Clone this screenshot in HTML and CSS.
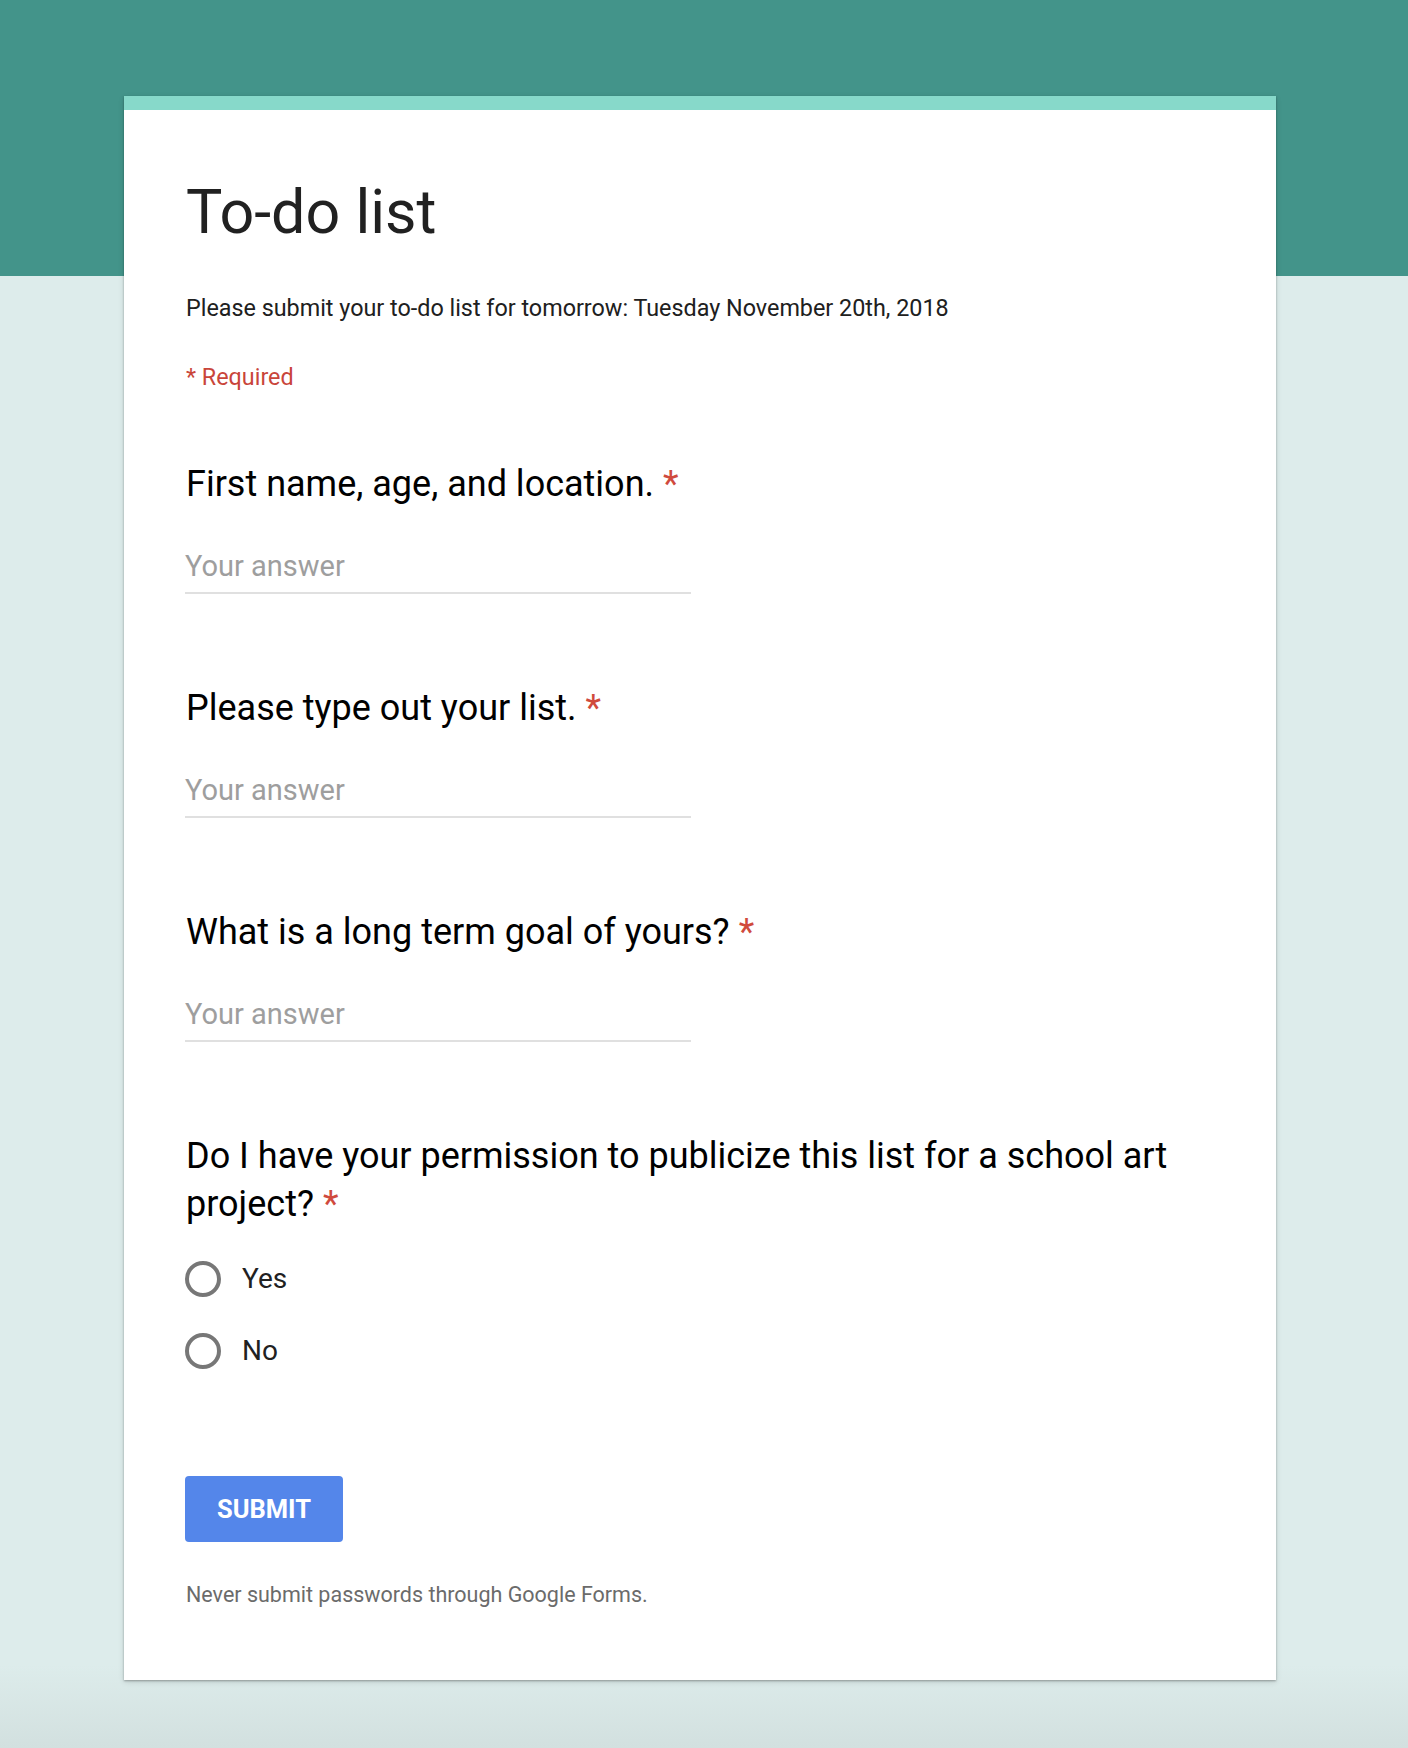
FILE: index.html
```html
<!DOCTYPE html>
<html lang="en">
<head>
<meta charset="utf-8">
<title>To-do list</title>
<link rel="stylesheet" href="styles.css">
</head>
<body>
<main class="card">
  <h1 class="title">To-do list</h1>
  <p class="desc">Please submit your to-do list for tomorrow: Tuesday November 20th, 2018</p>
  <p class="required">* Required</p>

  <div class="item">
    <div class="q">First name, age, and location.<span class="star">*</span></div>
    <div class="answer">Your answer</div>
  </div>

  <div class="item">
    <div class="q">Please type out your list.<span class="star">*</span></div>
    <div class="answer">Your answer</div>
  </div>

  <div class="item">
    <div class="q">What is a long term goal of yours?<span class="star">*</span></div>
    <div class="answer">Your answer</div>
  </div>

  <div class="item item-radio">
    <div class="q">Do I have your permission to publicize this list for a school art <span class="last-word">project?<span class="star">*</span></span></div>
    <div class="options">
      <div class="option"><span class="radio"></span><span class="opt-label">Yes</span></div>
      <div class="option"><span class="radio"></span><span class="opt-label">No</span></div>
    </div>
  </div>

  <button class="submit" type="button">SUBMIT</button>
  <p class="footer">Never submit passwords through Google Forms.</p>
</main>
</body>
</html>
```
FILE: styles.css
```css
html, body {
  margin: 0;
  padding: 0;
}

body {
  min-height: 1748px;
  font-family: Roboto, "Liberation Sans", Arial, sans-serif;
  background: linear-gradient(to bottom,
    #43948a 0px, #43948a 276px,
    #ddeceb 276px, #ddeceb 1665px,
    #d2e0df 1748px);
  overflow: hidden;
}

.card {
  box-sizing: border-box;
  width: 1152px;
  margin: 96px 0 68px 124px;
  background: #ffffff;
  border-top: 14px solid #87d9ca;
  padding: 64px 60px 70px 62px;
  box-shadow: 0 1px 2px rgba(0, 0, 0, 0.3), 0 2px 6px rgba(0, 0, 0, 0.12);
  display: flex;
  flex-direction: column;
  align-items: flex-start;
}

.title {
  margin: 0;
  font-size: 61px;
  line-height: 76px;
  font-weight: 400;
  color: #212121;
}

.desc {
  margin: 42px 0 0;
  font-size: 23.35px;
  line-height: 32px;
  color: #202020;
}

.required {
  margin: 37px 0 0;
  font-size: 23.35px;
  line-height: 32px;
  color: #c9453a;
}

.item {
  display: flex;
  flex-direction: column;
  align-self: stretch;
  margin-top: 89.6px;
}

.required + .item {
  margin-top: 67px;
}

.q {
  font-size: 36px;
  line-height: 48px;
  color: #000000;
}

.last-word {
  white-space: nowrap;
}

.star {
  margin-left: 9px;
  color: #d04a3d;
}

.answer {
  box-sizing: border-box;
  width: 506px;
  margin-top: 40.4px;
  margin-left: -1px;
  padding-bottom: 8px;
  border-bottom: 2px solid #e0e0e0;
  font-size: 29px;
  line-height: 36px;
  color: #9e9e9e;
}

.item-radio {
  margin-top: 90px;
}

.options {
  display: flex;
  flex-direction: column;
  gap: 16px;
  margin-top: 23px;
}

.option {
  display: flex;
  align-items: center;
  height: 56px;
  gap: 21px;
}

.radio {
  box-sizing: border-box;
  width: 36px;
  height: 36px;
  margin-left: -1px;
  border: 4px solid #777777;
  border-radius: 50%;
  flex: none;
}

.opt-label {
  font-size: 28px;
  line-height: 56px;
  color: #212121;
}

.submit {
  box-sizing: border-box;
  margin-top: 97px;
  margin-left: -1px;
  width: 158px;
  height: 66px;
  padding: 0;
  border: none;
  border-radius: 4px;
  background: #5486ea;
  color: #ffffff;
  font-family: Roboto, "Liberation Sans", Arial, sans-serif;
  font-size: 25.5px;
  font-weight: 700;
  line-height: 66px;
  text-align: center;
}

.footer {
  margin: 38px 0 0;
  font-size: 21.5px;
  line-height: 30px;
  color: #6b6b6b;
}
```
